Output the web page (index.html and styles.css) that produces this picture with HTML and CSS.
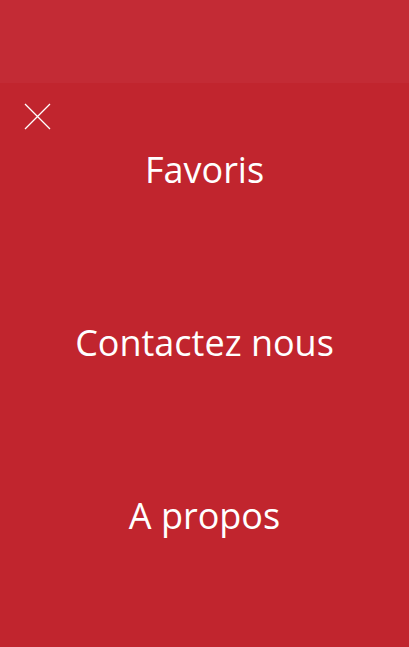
FILE: index.html
```html
<!DOCTYPE html>
<html lang="fr">
<head>
<meta charset="utf-8">
<link rel="stylesheet" href="styles.css">
</head>
<body>
<div class="app">
  <header class="topbar"></header>
  <nav class="menu">
    <button class="close" aria-label="Fermer">
      <svg width="27" height="27" viewBox="0 0 27 27"><path d="M1 1 L26 26 M26 1 L1 26" stroke="#fff" stroke-width="1.3" fill="none"/></svg>
    </button>
    <a class="item" href="#">Favoris</a>
    <a class="item" href="#">Contactez nous</a>
    <a class="item" href="#">A propos</a>
  </nav>
</div>
</body>
</html>
```
FILE: styles.css
```css
html, body { margin: 0; padding: 0; }
body { background: #c1252e; font-family: "Open Sans", "Noto Sans", sans-serif; }
.app { width: 409px; height: 647px; display: flex; flex-direction: column; overflow: hidden; }
.topbar { height: 83px; background: #c32b35; flex: none; }
.menu { position: relative; flex: 1; background: #c1252e; display: flex; flex-direction: column; }
.close { position: absolute; left: 24px; top: 20px; padding: 0; border: 0; background: none; width: 27px; height: 27px; cursor: pointer; }
.close svg { display: block; }
.item { height: 173px; display: flex; align-items: center; justify-content: center; color: #fff; text-decoration: none; font-size: 36px; letter-spacing: 0; }
```
